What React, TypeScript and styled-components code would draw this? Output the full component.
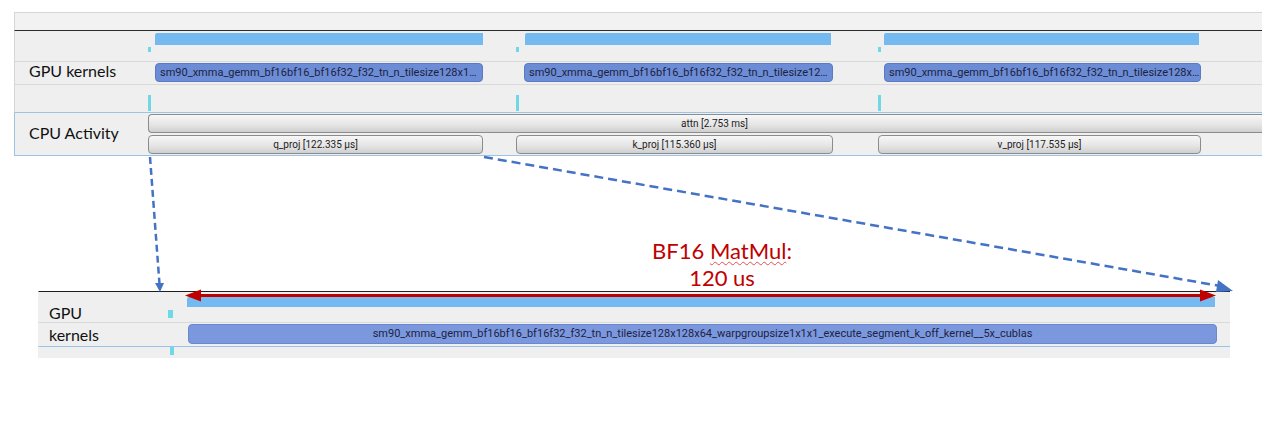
import React from "react";
import styled, { createGlobalStyle } from "styled-components";

const GlobalStyle = createGlobalStyle`
  html, body { margin: 0; padding: 0; background: #ffffff; }
  body { font-family: "Lato", "Open Sans", sans-serif; }
`;

const Page = styled.div`
  position: relative;
  width: 1275px;
  height: 431px;
  background: #ffffff;
  padding-top: 12px;
  box-sizing: border-box;
`;

const Panel = styled.div<{ $left: number; $width: number }>`
  margin-left: ${(p) => p.$left}px;
  width: ${(p) => p.$width}px;
  display: flex;
  flex-direction: column;
  background: #efefef;
`;

const HeaderStrip = styled.div`
  height: 17px;
  background: #f2f2f2;
  border-top: 1px solid #d6d6d6;
  border-left: 1px solid #d6d6d6;
  border-bottom: 1px solid #2a2a2a;
`;

const Row = styled.div<{ $h: number; $line?: string; $edge?: string; $topLine?: string }>`
  display: flex;
  height: ${(p) => p.$h}px;
  border-bottom: 1px solid ${(p) => p.$line ?? "#d9d9d9"};
  border-left: 1px solid ${(p) => p.$edge ?? "#d6d6d6"};
  ${(p) => (p.$topLine ? `border-top: 1px solid ${p.$topLine};` : "")}
`;

const Label = styled.div<{ $w: number; $pad: number; $align?: string; $lift?: number }>`
  width: ${(p) => p.$w}px;
  flex: none;
  padding-left: ${(p) => p.$pad}px;
  padding-bottom: ${(p) => p.$lift ?? 0}px;
  box-sizing: border-box;
  display: flex;
  align-items: ${(p) => p.$align ?? "center"};
  font-family: "Lato", "Open Sans", sans-serif;
  font-size: 16px;
  color: #111111;
  white-space: nowrap;
`;

const Canvas = styled.div`
  position: relative;
  flex: 1;
  overflow: hidden;
`;

const Bar = styled.div`
  position: absolute;
  background: #74b9ef;
  border-top-left-radius: 2px;
`;

const Tick = styled.div`
  position: absolute;
  width: 3px;
  background: #6ed8e6;
`;

const Kernel = styled.div<{ $center?: boolean; $light?: boolean }>`
  position: absolute;
  box-sizing: border-box;
  background: ${(p) => (p.$light ? "#7b98df" : "#6d8cd6")};
  border: 1px solid ${(p) => (p.$light ? "#6a87d0" : "#5b79c4")};
  border-radius: 4px;
  color: #1b2340;
  font-family: Roboto, "Liberation Sans", sans-serif;
  font-size: 11px;
  line-height: 17px;
  padding: 0 4px;
  text-align: ${(p) => (p.$center ? "center" : "left")};
  white-space: nowrap;
`;

const CpuBar = styled.div<{ $open?: boolean }>`
  position: absolute;
  box-sizing: border-box;
  background: linear-gradient(#f7f7f7, #e4e4e4 60%, #cfcfcf);
  border: 1px solid #8c8c8c;
  border-radius: 4px;
  ${(p) => (p.$open ? "border-right: none; border-top-right-radius: 0; border-bottom-right-radius: 0;" : "")}
  color: #222222;
  font-family: Roboto, "Liberation Sans", sans-serif;
  font-size: 10px;
  line-height: 17px;
  text-align: center;
  white-space: nowrap;
`;

const CpuText = styled.span<{ $shift?: number }>`
  position: relative;
  left: ${(p) => p.$shift ?? 0}px;
`;

const Annotation = styled.div`
  height: 135px;
  display: flex;
  align-items: flex-end;
  padding-left: 622px;
`;

const AnnotationText = styled.div`
  width: 200px;
  text-align: center;
  color: #c00000;
  font-family: "Lato", "Open Sans", sans-serif;
  font-size: 22px;
  line-height: 27px;
  padding-bottom: 0px;
`;

const Squiggle = styled.span`
  text-decoration: underline wavy #e05050;
  text-decoration-thickness: 1px;
  text-underline-offset: 2px;
`;

const Overlay = styled.svg`
  position: absolute;
  left: 0;
  top: 0;
  pointer-events: none;
`;

type Box = { left: number; width: number };

const topBars: Box[] = [
  { left: 7, width: 328 },
  { left: 377, width: 306 },
  { left: 736, width: 315 },
];
const tickXs = [0, 368, 730];
const kernels: (Box & { label: string })[] = [
  { left: 7, width: 328, label: "sm90_xmma_gemm_bf16bf16_bf16f32_f32_tn_n_tilesize128x1…" },
  { left: 376, width: 309, label: "sm90_xmma_gemm_bf16bf16_bf16f32_f32_tn_n_tilesize12…" },
  { left: 736, width: 317, label: "sm90_xmma_gemm_bf16bf16_bf16f32_f32_tn_n_tilesize128x…" },
];
const cpuOps: (Box & { label: string })[] = [
  { left: 0, width: 335, label: "q_proj [122.335 µs]" },
  { left: 368, width: 317, label: "k_proj [115.360 µs]" },
  { left: 730, width: 323, label: "v_proj [117.535 µs]" },
];

export default function App() {
  return (
    <>
      <GlobalStyle />
      <Page>
        <Panel $left={14} $width={1248}>
          <HeaderStrip />
          <Row $h={30}>
            <Label $w={133} $pad={14} />
            <Canvas>
              {topBars.map((b, i) => (
                <Bar key={i} style={{ left: b.left, width: b.width, top: 2, height: 12 }} />
              ))}
              {tickXs.map((x, i) => (
                <Tick key={i} style={{ left: x, top: 16, height: 5 }} />
              ))}
            </Canvas>
          </Row>
          <Row $h={22}>
            <Label $w={133} $pad={14} $lift={5}>GPU kernels</Label>
            <Canvas>
              {kernels.map((k, i) => (
                <Kernel key={i} style={{ left: k.left, width: k.width, top: 1, height: 19 }}>
                  {k.label}
                </Kernel>
              ))}
            </Canvas>
          </Row>
          <Row $h={27} $line="#9cc3e5">
            <Label $w={133} $pad={14} />
            <Canvas>
              {tickXs.map((x, i) => (
                <Tick key={i} style={{ left: x, top: 10, height: 16 }} />
              ))}
            </Canvas>
          </Row>
          <Row $h={42} $line="#9cc3e5" $edge="#9cc3e5">
            <Label $w={133} $pad={14} $lift={3}>CPU Activity</Label>
            <Canvas>
              <CpuBar $open style={{ left: 0, width: 1200, top: 1, height: 19 }}>
                <CpuText $shift={-34}>attn [2.753 ms]</CpuText>
              </CpuBar>
              {cpuOps.map((c, i) => (
                <CpuBar key={i} style={{ left: c.left, width: c.width, top: 22, height: 19 }}>
                  {c.label}
                </CpuBar>
              ))}
            </Canvas>
          </Row>
        </Panel>

        <Annotation>
          <AnnotationText>
            BF16 <Squiggle>MatMul</Squiggle>:
            <br />
            120 us
          </AnnotationText>
        </Annotation>

        <Panel $left={38} $width={1192}>
          <Row $h={30} $edge="transparent" $topLine="#1e1e1e">
            <Label $w={110} $pad={10} $align="flex-end">GPU</Label>
            <Canvas>
              <Bar style={{ left: 38, width: 1028, top: 5, height: 10 }} />
              <Tick style={{ left: 19, top: 18, height: 8, width: 5 }} />
            </Canvas>
          </Row>
          <Row $h={23} $line="#9cc3e5" $edge="transparent">
            <Label $w={110} $pad={10}>kernels</Label>
            <Canvas>
              <Kernel $center $light style={{ left: 39, width: 1029, top: 1, height: 20 }}>
                sm90_xmma_gemm_bf16bf16_bf16f32_f32_tn_n_tilesize128x128x64_warpgroupsize1x1x1_execute_segment_k_off_kernel__5x_cublas
              </Kernel>
            </Canvas>
          </Row>
          <Row $h={10} $line="transparent" $edge="transparent">
            <Label $w={110} $pad={10} />
            <Canvas>
              <Tick style={{ left: 21, top: 0, height: 8, width: 4 }} />
            </Canvas>
          </Row>
        </Panel>

        <Overlay width={1275} height={431} viewBox="0 0 1275 431">
          <line x1="150" y1="157" x2="159.5" y2="284" stroke="#4472c4" strokeWidth="2.5" strokeDasharray="7 4" />
          <path d="M155,283 L164,283 L160,292 Z" fill="#4472c4" />
          <line x1="484" y1="157" x2="1220" y2="286" stroke="#4472c4" strokeWidth="2.5" strokeDasharray="9 5" />
          <path d="M1218,280 L1233,291 L1216,292 Z" fill="#4472c4" />
          <line x1="196" y1="295.5" x2="1204" y2="295.5" stroke="#c00000" strokeWidth="3" />
          <path d="M185,295.5 L201,289.5 L201,301.5 Z" fill="#c00000" />
          <path d="M1216,295.5 L1200,289.5 L1200,301.5 Z" fill="#c00000" />
        </Overlay>
      </Page>
    </>
  );
}
